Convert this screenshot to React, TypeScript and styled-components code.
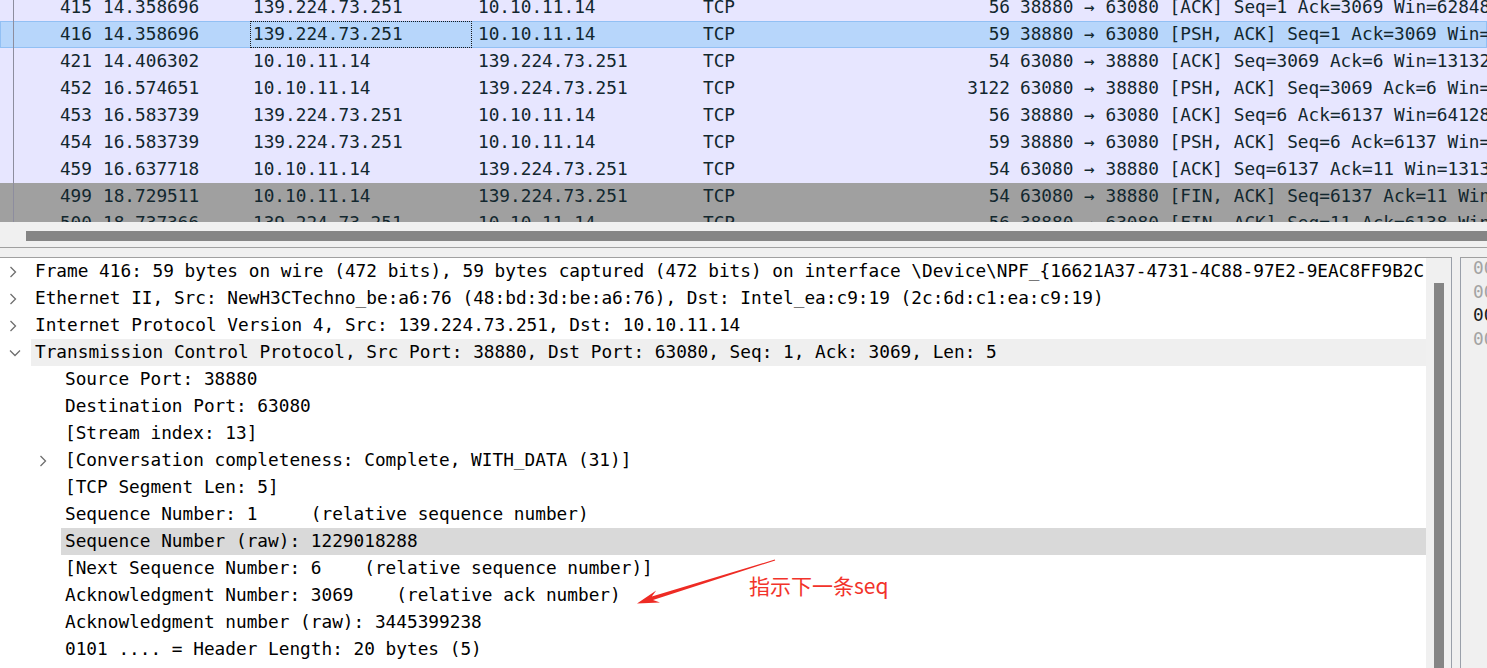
import React from "react";
import styled, { createGlobalStyle } from "styled-components";

const GlobalStyle = createGlobalStyle`
  html, body {
    margin: 0;
    padding: 0;
    background: #f0f0f0;
    overflow: hidden;
  }
  * { box-sizing: border-box; }
`;

const MONO = `"DejaVu Sans Mono", "Liberation Mono", monospace`;

const Page = styled.div`
  position: relative;
  width: 1487px;
  height: 668px;
  overflow: hidden;
  font-family: ${MONO};
  font-size: 17.76px;
`;

const PacketList = styled.div`
  height: 222px;
  overflow: hidden;
  background: #e7e6ff;
`;

const ListInner = styled.div`
  margin-top: -6px;
`;

const Row = styled.div<{ $bg: string; $selected?: boolean }>`
  display: grid;
  grid-template-columns: 98px 152px 222px 226px 182px 135px 1fr;
  height: 27px;
  line-height: 27px;
  white-space: nowrap;
  color: #12272e;
  background: ${(p) => (p.$selected ? "#b7d6fb" : p.$bg)};
  box-shadow: ${(p) => (p.$selected ? "inset 0 0 0 1px #92c0f4" : "none")};
`;

const Cell = styled.div<{ $align?: "left" | "right"; $pad: number; $focus?: boolean }>`
  overflow: hidden;
  text-align: ${(p) => p.$align || "left"};
  padding-left: ${(p) => (p.$align === "right" ? 0 : p.$pad)}px;
  padding-right: ${(p) => (p.$align === "right" ? p.$pad : 0)}px;
  outline: ${(p) => (p.$focus ? "1px dotted #1a1a1a" : "none")};
  outline-offset: -1px;
`;

const NoCell = styled(Cell)`
  background: linear-gradient(#8d8d9e, #8d8d9e) no-repeat 13px 0 / 1px 100%;
`;

const HScroll = styled.div`
  height: 26px;
  padding: 9px 0 6px 26px;
  border-bottom: 1px solid #a0a0a0;
`;

const HThumb = styled.div`
  height: 10px;
  background: #858585;
`;

const Spacer = styled.div`
  height: 9px;
`;

const Lower = styled.div`
  display: flex;
  height: 420px;
`;

const DetailPane = styled.div`
  display: flex;
  width: 1452px;
  border-top: 1px solid #a0a0a0;
  border-right: 1px solid #9aa0aa;
`;

const Tree = styled.div`
  width: 1426px;
  background: #ffffff;
  overflow: hidden;
  color: #000;
`;

const TreeRow = styled.div<{ $level: number }>`
  display: flex;
  height: 27px;
  line-height: 27px;
  padding-left: ${(p) => p.$level * 30}px;
  white-space: nowrap;
`;

const Toggle = styled.div`
  flex: none;
  width: 31px;
  display: flex;
  align-items: center;
  padding-left: 9px;
`;

const Label = styled.div<{ $tone?: "open" | "sel" }>`
  flex: 1;
  padding-left: 4px;
  overflow: hidden;
  white-space: pre;
  background: ${(p) =>
    p.$tone === "sel" ? "#d9d9d9" : p.$tone === "open" ? "#efefef" : "transparent"};
`;

const VScroll = styled.div`
  width: 25px;
  padding: 25px 0 0 8px;
  background: #f0f0f0;
`;

const VThumb = styled.div`
  width: 10px;
  height: 100%;
  background: #858585;
`;

const Gap = styled.div`
  width: 8px;
`;

const HexPane = styled.div`
  flex: 1;
  border-top: 1px solid #a0a0a0;
  border-left: 1px solid #9aa0aa;
  padding: 0 0 0 12px;
  overflow: hidden;
  white-space: pre;
`;

const HexLine = styled.div<{ $active?: boolean }>`
  height: 23.5px;
  line-height: 20px;
  color: ${(p) => (p.$active ? "#1a1a1a" : "#a3a3a3")};
`;

const Note = styled.div`
  position: absolute;
  left: 749px;
  top: 570px;
  font-family: "Noto Sans CJK SC", sans-serif;
  font-size: 21px;
  line-height: 30px;
  color: #f2332b;
  white-space: nowrap;
`;

const ArrowSvg = styled.svg`
  position: absolute;
  left: 0;
  top: 0;
  pointer-events: none;
`;

type Packet = {
  no: string;
  time: string;
  src: string;
  dst: string;
  len: string;
  info: string;
  bg: string;
  selected?: boolean;
};

const TCP_BG = "#e7e6ff";
const FIN_BG = "#a0a0a0";

const packets: Packet[] = [
  { no: "415", time: "14.358696", src: "139.224.73.251", dst: "10.10.11.14", len: "56", info: "38880 → 63080 [ACK] Seq=1 Ack=3069 Win=62848 Len=0", bg: TCP_BG },
  { no: "416", time: "14.358696", src: "139.224.73.251", dst: "10.10.11.14", len: "59", info: "38880 → 63080 [PSH, ACK] Seq=1 Ack=3069 Win=62848 Len=5", bg: TCP_BG, selected: true },
  { no: "421", time: "14.406302", src: "10.10.11.14", dst: "139.224.73.251", len: "54", info: "63080 → 38880 [ACK] Seq=3069 Ack=6 Win=131328 Len=0", bg: TCP_BG },
  { no: "452", time: "16.574651", src: "10.10.11.14", dst: "139.224.73.251", len: "3122", info: "63080 → 38880 [PSH, ACK] Seq=3069 Ack=6 Win=131328 Len=3068", bg: TCP_BG },
  { no: "453", time: "16.583739", src: "139.224.73.251", dst: "10.10.11.14", len: "56", info: "38880 → 63080 [ACK] Seq=6 Ack=6137 Win=64128 Len=0", bg: TCP_BG },
  { no: "454", time: "16.583739", src: "139.224.73.251", dst: "10.10.11.14", len: "59", info: "38880 → 63080 [PSH, ACK] Seq=6 Ack=6137 Win=64128 Len=5", bg: TCP_BG },
  { no: "459", time: "16.637718", src: "10.10.11.14", dst: "139.224.73.251", len: "54", info: "63080 → 38880 [ACK] Seq=6137 Ack=11 Win=131328 Len=0", bg: TCP_BG },
  { no: "499", time: "18.729511", src: "10.10.11.14", dst: "139.224.73.251", len: "54", info: "63080 → 38880 [FIN, ACK] Seq=6137 Ack=11 Win=131328 Len=0", bg: FIN_BG },
  { no: "500", time: "18.737366", src: "139.224.73.251", dst: "10.10.11.14", len: "56", info: "38880 → 63080 [FIN, ACK] Seq=11 Ack=6138 Win=64128 Len=0", bg: FIN_BG },
];

type Node = {
  level: number;
  text: string;
  toggle?: "closed" | "open";
  tone?: "open" | "sel";
};

const tree: Node[] = [
  { level: 0, toggle: "closed", text: "Frame 416: 59 bytes on wire (472 bits), 59 bytes captured (472 bits) on interface \\Device\\NPF_{16621A37-4731-4C88-97E2-9EAC8FF9B2C" },
  { level: 0, toggle: "closed", text: "Ethernet II, Src: NewH3CTechno_be:a6:76 (48:bd:3d:be:a6:76), Dst: Intel_ea:c9:19 (2c:6d:c1:ea:c9:19)" },
  { level: 0, toggle: "closed", text: "Internet Protocol Version 4, Src: 139.224.73.251, Dst: 10.10.11.14" },
  { level: 0, toggle: "open", tone: "open", text: "Transmission Control Protocol, Src Port: 38880, Dst Port: 63080, Seq: 1, Ack: 3069, Len: 5" },
  { level: 1, text: "Source Port: 38880" },
  { level: 1, text: "Destination Port: 63080" },
  { level: 1, text: "[Stream index: 13]" },
  { level: 1, toggle: "closed", text: "[Conversation completeness: Complete, WITH_DATA (31)]" },
  { level: 1, text: "[TCP Segment Len: 5]" },
  { level: 1, text: "Sequence Number: 1     (relative sequence number)" },
  { level: 1, tone: "sel", text: "Sequence Number (raw): 1229018288" },
  { level: 1, text: "[Next Sequence Number: 6    (relative sequence number)]" },
  { level: 1, text: "Acknowledgment Number: 3069    (relative ack number)" },
  { level: 1, text: "Acknowledgment number (raw): 3445399238" },
  { level: 1, text: "0101 .... = Header Length: 20 bytes (5)" },
];

const hex = [
  "0000  2c 6d c1 ea c9 19 48 bd",
  "0010  00 2d 7a 3c 40 00 2f 06",
  "0020  0b 0e 97 e0 f6 60 49 41",
  "0030  01 ea 5e 27 00 00 00 00",
];

function Chevron({ open }: { open: boolean }) {
  return open ? (
    <svg width="12" height="8" viewBox="0 0 12 8">
      <polyline points="1,1.5 6,6.5 11,1.5" fill="none" stroke="#6e6e6e" strokeWidth="1.3" />
    </svg>
  ) : (
    <svg width="8" height="12" viewBox="0 0 8 12">
      <polyline points="1.5,1 6.5,6 1.5,11" fill="none" stroke="#6e6e6e" strokeWidth="1.3" />
    </svg>
  );
}

function App() {
  return (
    <Page>
      <GlobalStyle />
      <PacketList>
        <ListInner>
          {packets.map((p) => (
            <Row key={p.no} $bg={p.bg} $selected={p.selected}>
              <NoCell $align="right" $pad={6}>{p.no}</NoCell>
              <Cell $pad={5}>{p.time}</Cell>
              <Cell $pad={3} $focus={p.selected}>{p.src}</Cell>
              <Cell $pad={6}>{p.dst}</Cell>
              <Cell $pad={5}>TCP</Cell>
              <Cell $align="right" $pad={5}>{p.len}</Cell>
              <Cell $pad={5}>{p.info}</Cell>
            </Row>
          ))}
        </ListInner>
      </PacketList>
      <HScroll>
        <HThumb />
      </HScroll>
      <Spacer />
      <Lower>
        <DetailPane>
          <Tree>
            {tree.map((n, i) => (
              <TreeRow key={i} $level={n.level}>
                <Toggle>{n.toggle && <Chevron open={n.toggle === "open"} />}</Toggle>
                <Label $tone={n.tone}>{n.text}</Label>
              </TreeRow>
            ))}
          </Tree>
          <VScroll>
            <VThumb />
          </VScroll>
        </DetailPane>
        <Gap />
        <HexPane>
          {hex.map((h, i) => (
            <HexLine key={i} $active={i === 2}>{h}</HexLine>
          ))}
        </HexPane>
      </Lower>
      <ArrowSvg width="1487" height="668" viewBox="0 0 1487 668">
        <polygon
          points="637,603.5 660,602.4 653,600 775.2,560.4 774.8,559.6 651.8,596.6 656.2,590.6"
          fill="#ee2b24"
        />
      </ArrowSvg>
      <Note>指示下一条seq</Note>
    </Page>
  );
}

export default App;
